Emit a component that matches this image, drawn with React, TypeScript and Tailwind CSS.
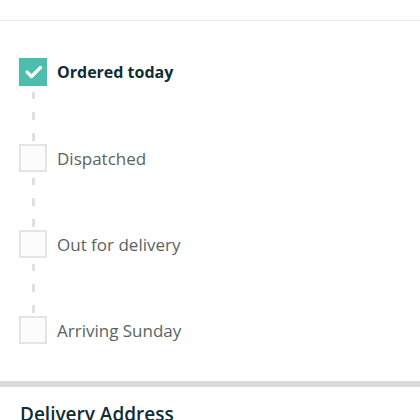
import React from 'react';

type Step = { label: string; done: boolean };

const steps: Step[] = [
    { label: 'Ordered today', done: true },
    { label: 'Dispatched', done: false },
    { label: 'Out for delivery', done: false },
    { label: 'Arriving Sunday', done: false },
];

const StepBox: React.FC<{ done: boolean }> = ({ done }) =>
    done ? (
        <div className="w-[28px] h-[28px] shrink-0 bg-[#4dbdad] flex items-center justify-center">
            <svg width="28" height="28" viewBox="0 0 28 28" fill="none">
                <polyline
                    points="8,14 12.5,18.5 21.5,9.5"
                    stroke="#ffffff"
                    strokeWidth="3.2"
                    strokeLinecap="round"
                    strokeLinejoin="round"
                />
            </svg>
        </div>
    ) : (
        <div className="w-[28px] h-[28px] shrink-0 border-2 border-[#e4e4e4] bg-[#fcfcfc]" />
    );

// Dashed connector between two steps
const Connector = () => (
    <div className="w-[28px] h-[58px] flex flex-col items-center gap-[13px] pt-[6px]">
        <div className="w-[3px] h-[7px] bg-[#e0e0e0]" />
        <div className="w-[3px] h-[8px] bg-[#e0e0e0]" />
        <div className="w-[3px] h-[8px] bg-[#e0e0e0]" />
    </div>
);

export default function App() {
    return (
        <div className="w-[420px] h-[420px] overflow-hidden bg-white font-['Open_Sans',sans-serif]">
            <div className="h-[20px] border-b border-[#ececec] box-content" />

            {/* Tracking steps */}
            <div className="pt-[37px] px-[19px] flex flex-col">
                {steps.map((step, i) => (
                    <React.Fragment key={step.label}>
                        {i > 0 && <Connector />}
                        <div className="flex items-center gap-[10px] h-[28px]">
                            <StepBox done={step.done} />
                            <span
                                className={
                                    step.done
                                        ? 'text-[16px] font-bold text-[#0f2d35] leading-none'
                                        : 'text-[17px] text-[#5a6363] leading-none'
                                }
                            >
                                {step.label}
                            </span>
                        </div>
                    </React.Fragment>
                ))}
            </div>

            <div className="mt-[37px] h-[6px] bg-[#d9dbdb]" />

            <div className="px-[20px] pt-[14px]">
                <h2 className="text-[19px] font-semibold text-[#0f2d35] leading-[26px]">Delivery Address</h2>
            </div>
        </div>
    );
}
